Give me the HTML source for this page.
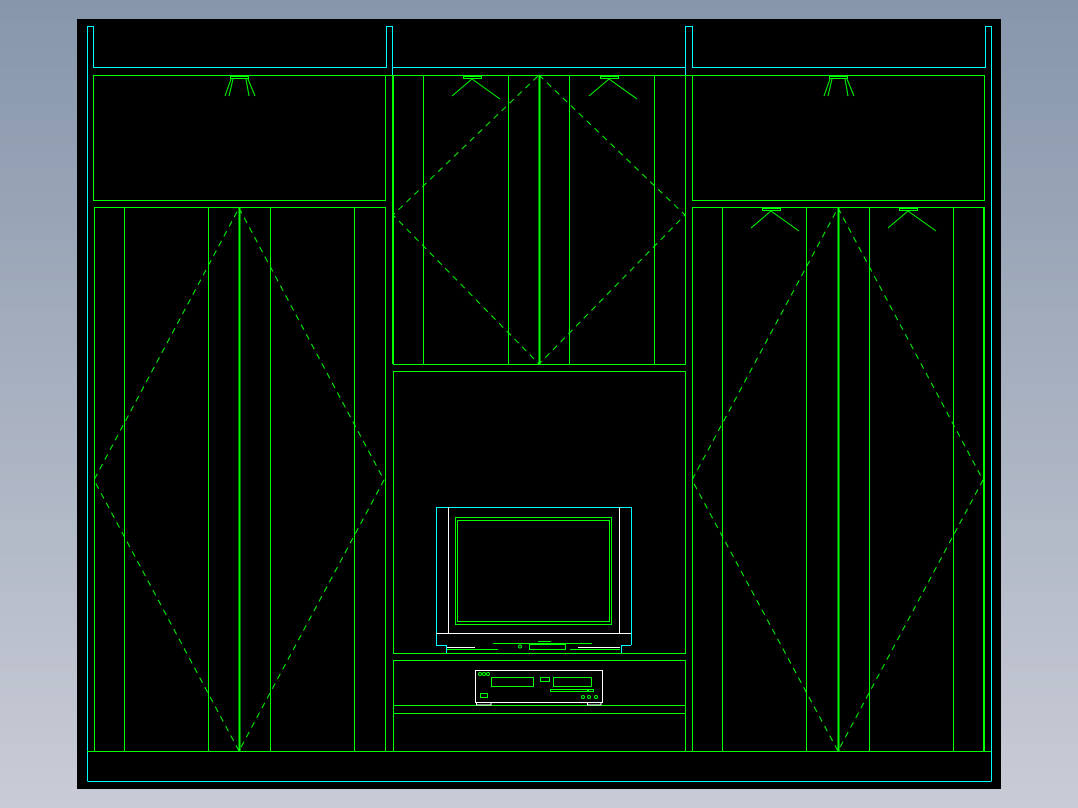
<!DOCTYPE html>
<html><head><style>
html,body{margin:0;padding:0;width:1078px;height:808px;overflow:hidden;background:linear-gradient(#8796ab,#c9ccd6);}
svg{position:absolute;left:0;top:0}
</style></head><body>
<svg width="1078" height="808" viewBox="0 0 1078 808" shape-rendering="crispEdges">
<rect x="77" y="19" width="924" height="770" fill="#000"/>
<g fill="none" stroke="#0ff" stroke-width="1">
<path d="M87.5 781V26.5H93.5V67.5H386.5V26.5H392.5V67.5H685.5V26.5H692.5V67.5H985.5V26.5H991.5V781"/>
<path d="M87.5 781.5H991.5"/>
<path d="M392.5 67V200M685.5 67V200"/>
</g>
<g fill="none" stroke="#0f0" stroke-width="1">
<path d="M93.5 75.5H984.5"/>
<rect x="93.5" y="75.5" width="292" height="125"/>
<rect x="692.5" y="75.5" width="292" height="125"/>
<rect x="94.5" y="207.5" width="291" height="544"/>
<rect x="692.5" y="207.5" width="292" height="544"/>
<rect x="393.5" y="75.5" width="292" height="289"/>
<rect x="393.5" y="371.5" width="292" height="282"/>
<rect x="393.5" y="660.5" width="292" height="91"/>
<path d="M393 705.5H685M393 713.5H685M87 751.5H991"/>
<path d="M124.5 208V751M208.5 208V751M270.5 208V751M354.5 208V751"/>
<path d="M423.5 75V364M508.5 75V364M569.5 75V364M654.5 75V364"/>
<path d="M722.5 208V751M806.5 208V751M869.5 208V751M953.5 208V751"/>
<path d="M239.5 208V751M838.5 208V751M539.5 75V364M984 208V751M393 75V364" stroke-width="2"/>
</g>
<g fill="none" stroke="#0f0" stroke-width="1" stroke-dasharray="6,5" shape-rendering="auto">
<path d="M239 208L384 480L239 751L94 480Z"/>
<path d="M539 75L685 215L539 364L393 215Z"/>
<path d="M838 208L983 480L838 751L692 480Z"/>
</g>
<g fill="none" stroke="#0f0" stroke-width="1" shape-rendering="auto">
<rect x="230.5" y="76.5" width="18" height="2"/>
<path d="M231 79L225 96M233 79L229 96M246 79L249 96M248 79L255 96"/>
<rect x="829.5" y="76.5" width="18" height="2"/>
<path d="M830 79L824 96M832 79L828 96M845 79L848 96M847 79L854 96"/>
<rect x="463.5" y="76.5" width="18" height="2"/>
<path d="M472 79L452 96M472 79L500 99"/>
<rect x="600.5" y="76.5" width="18" height="2"/>
<path d="M609 79L589 96M609 79L637 99"/>
<rect x="762.5" y="208.5" width="18" height="2"/>
<path d="M771 211L751 228M771 211L799 231"/>
<rect x="899.5" y="208.5" width="18" height="2"/>
<path d="M908 211L888 228M908 211L936 231"/>
</g>
<!-- TV -->
<g fill="none" shape-rendering="auto">
<path d="M436.5 645V507.5H631.5V645" stroke="#0ff"/>
<path d="M436 645.5H446M621 645.5H631M446.5 645V653M621.5 645V653" stroke="#0ff"/>
<path d="M448.5 507V633M619.5 507V633M436 633.5H631" stroke="#fff"/>
<path d="M447 647.5H475M578 647.5H620" stroke="#fff"/>
<rect x="455.5" y="517.5" width="156" height="107" stroke="#0f0"/>
<rect x="457.5" y="520.5" width="152" height="101" stroke="#0f0"/>
<path d="M493 643.5H592M538 641.5H551M447 649.5H498M570 649.5H620" stroke="#0f0"/>
<rect x="529.5" y="644.5" width="36" height="5" stroke="#0f0"/>
<circle cx="520" cy="646.5" r="1.5" stroke="#0f0"/>
<!-- DVD -->
<rect x="475.5" y="670.5" width="127" height="32" stroke="#fff"/>
<path d="M476.5 703V705H491V703M587.5 703V705H601V703" stroke="#fff"/>
<rect x="491.5" y="677.5" width="42" height="9" stroke="#0f0"/>
<rect x="540.5" y="677.5" width="9" height="4" stroke="#0f0"/>
<rect x="553.5" y="677.5" width="38" height="9" stroke="#0f0"/>
<rect x="550.5" y="689.5" width="38" height="2" stroke="#0f0"/>
<rect x="587.5" y="689.5" width="6" height="2" stroke="#0f0"/>
<rect x="480.5" y="693.5" width="7" height="4" stroke="#0f0"/>
<circle cx="480" cy="674" r="1.5" stroke="#0f0"/><circle cx="484" cy="674" r="1.5" stroke="#0f0"/><circle cx="488" cy="674" r="1.5" stroke="#0f0"/>
<circle cx="583" cy="697" r="1.5" stroke="#0f0"/><circle cx="589" cy="697" r="1.5" stroke="#0f0"/><circle cx="596" cy="697" r="1.5" stroke="#0f0"/>
</g>
</svg>
</body></html>
